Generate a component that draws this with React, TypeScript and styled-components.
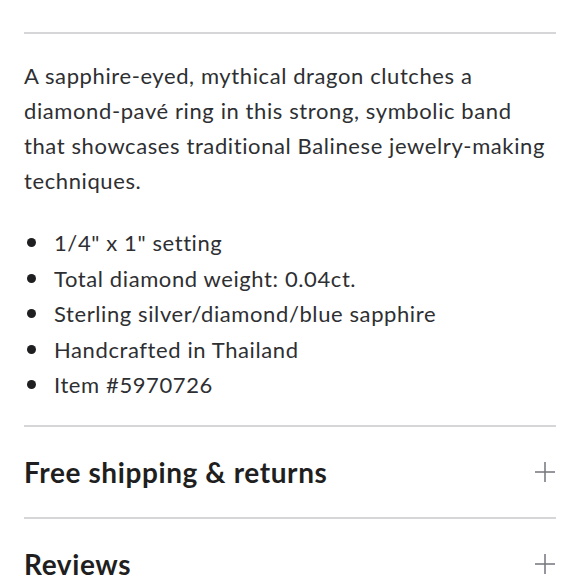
import styled, { createGlobalStyle } from "styled-components";

const GlobalStyle = createGlobalStyle`
  body {
    margin: 0;
    background: #ffffff;
    font-family: Lato, "Open Sans", sans-serif;
    color: #2e2f32;
  }
`;

const bullets = [
  "1/4\" x 1\" setting",
  "Total diamond weight: 0.04ct.",
  "Sterling silver/diamond/blue sapphire",
  "Handcrafted in Thailand",
  "Item #5970726",
];

const sections = ["Free shipping & returns", "Reviews"];

function PlusIcon() {
  return (
    <svg width="22" height="22" viewBox="0 0 22 22" fill="none">
      <path d="M11 1v20M1 11h20" stroke="#74767c" strokeWidth="1.5" />
    </svg>
  );
}

export default function App() {
  return (
    <>
      <GlobalStyle />
      <Page>
        <Divider />
        <Description>
          A sapphire-eyed, mythical dragon clutches a diamond-pavé ring in this
          strong, symbolic band that showcases traditional Balinese
          jewelry-making techniques.
        </Description>
        <BulletList>
          {bullets.map((b) => (
            <BulletItem key={b}>{b}</BulletItem>
          ))}
        </BulletList>
        {sections.map((s) => (
          <Section key={s}>
            <Divider />
            <SectionHeader>
              <SectionTitle>{s}</SectionTitle>
              <PlusIcon />
            </SectionHeader>
          </Section>
        ))}
      </Page>
    </>
  );
}

const Page = styled.div`
  padding: 32px 24px 0;
  display: flex;
  flex-direction: column;
`;

const Divider = styled.div`
  height: 2px;
  background: #d6d6d8;
`;

const Description = styled.p`
  margin: 24px 0 0;
  font-size: 22px;
  line-height: 35px;
  letter-spacing: 0.6px;
`;

const BulletList = styled.ul`
  margin: 27px 0 0;
  padding: 0 0 0 30px;
  list-style: none;
`;

const BulletItem = styled.li`
  position: relative;
  font-size: 22px;
  line-height: 35.5px;
  letter-spacing: 0.6px;

  &::before {
    content: "";
    position: absolute;
    left: -27px;
    top: 13px;
    width: 9px;
    height: 9px;
    border-radius: 50%;
    background: #1f1f21;
  }
`;

const Section = styled.div`
  display: flex;
  flex-direction: column;
  margin-top: 22px;

  & + & {
    margin-top: 0;
  }
`;

const SectionHeader = styled.div`
  display: flex;
  align-items: center;
  justify-content: space-between;
  height: 90px;
`;

const SectionTitle = styled.h2`
  margin: 0;
  font-size: 28px;
  font-weight: 700;
  letter-spacing: 0.6px;
  color: #1f1f21;
`;
